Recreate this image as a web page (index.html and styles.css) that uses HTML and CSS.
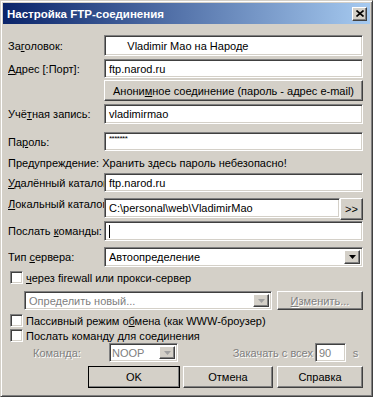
FILE: index.html
```html
<!DOCTYPE html>
<html lang="ru">
<head>
<meta charset="utf-8">
<title>Настройка FTP-соединения</title>
<link rel="stylesheet" href="styles.css">
</head>
<body>
<div class="window">
  <div class="titlebar">
    <span class="title">Настройка FTP-соединения</span>
    <span class="close raised">
      <svg width="8" height="7" viewBox="0 0 8 7"><path d="M0.5 0.5 L7.5 6.5 M7.5 0.5 L0.5 6.5" stroke="#000" stroke-width="1.6" fill="none"/></svg>
    </span>
  </div>
  <div class="body">
    <div class="row r1">
      <div class="label">За<u>г</u>оловок:</div>
      <div class="field sunken"><span class="pre">      Vladimir Mao на Народе</span></div>
    </div>
    <div class="row r2">
      <div class="label"><u>А</u>дрес [:Порт]:</div>
      <div class="field sunken">ftp.narod.ru</div>
    </div>
    <div class="row r3">
      <div class="label"></div>
      <div class="field btn">Анони<u>м</u>ное соединение (пароль - адрес e-mail)</div>
    </div>
    <div class="row r4">
      <div class="label">Учё<u>т</u>ная запись:</div>
      <div class="field sunken">vladimirmao</div>
    </div>
    <div class="row r5">
      <div class="label">Па<u>р</u>оль:</div>
      <div class="field sunken"><span class="stars">*******</span></div>
    </div>
    <div class="warning">Предупреждение: Хранить здесь пароль небезопасно!</div>
    <div class="row r6">
      <div class="label"><u>У</u>далённый каталог:</div>
      <div class="field sunken">ftp.narod.ru</div>
    </div>
    <div class="row r7">
      <div class="label"><u>Л</u>окальный каталог:</div>
      <div class="field sunken">C:\personal\web\VladimirMao</div>
      <div class="browse btn">&gt;&gt;</div>
    </div>
    <div class="row r8">
      <div class="label">Послать <u>к</u>оманды:</div>
      <div class="field sunken"><span class="caret"></span></div>
    </div>
    <div class="row r9">
      <div class="label">Тип <u>с</u>ервера:</div>
      <div class="field sunken combo">
        <span class="combo-text">Автоопределение</span>
        <span class="arrow btn"><svg width="7" height="4" viewBox="0 0 7 4"><path d="M0 0 H7 L3.5 4 Z" fill="#000"/></svg></span>
      </div>
    </div>
    <div class="check c1">
      <span class="box sunken"></span>
      <span><u>ч</u>ерез firewall или прокси-сервер</span>
    </div>
    <div class="row r10">
      <div class="field sunken combo proxy">
        <span class="combo-text disabled-plain">Определить новый...</span>
        <span class="arrow btn"><svg width="7" height="4" viewBox="0 0 7 4"><path d="M0 0 H7 L3.5 4 Z" fill="#a0a0a0"/></svg></span>
      </div>
      <div class="edit btn disabled"><u>И</u>зменить...</div>
    </div>
    <div class="check c2">
      <span class="box sunken"></span>
      <span>Пассивный режим о<u>б</u>мена (как WWW-броузер)</span>
    </div>
    <div class="check c3">
      <span class="box sunken"></span>
      <span>Послать команду для соединения</span>
    </div>
    <div class="row r11">
      <div class="cmd-label disabled">Команда:</div>
      <div class="sunken combo noop">
        <span class="combo-text disabled-plain">NOOP</span>
        <span class="arrow btn"><svg width="7" height="4" viewBox="0 0 7 4"><path d="M0 0 H7 L3.5 4 Z" fill="#a0a0a0"/></svg></span>
      </div>
      <div class="every disabled">Закачать с всех</div>
      <div class="sunken secs"><span class="disabled-plain">90</span></div>
      <div class="unit disabled">s</div>
    </div>
    <div class="buttons">
      <div class="btn ok">OK</div>
      <div class="btn cancel">Отмена</div>
      <div class="btn help">Справка</div>
    </div>
  </div>
</div>
</body>
</html>
```
FILE: styles.css
```css
* { box-sizing: border-box; }

body {
  margin: 0;
  font-family: "Liberation Sans", Arial, sans-serif;
  font-size: 11px;
  color: #000;
  background: #d4d0c8;
}

u { text-decoration: underline; text-underline-offset: 1px; }

.window {
  width: 373px;
  height: 397px;
  background: #d4d0c8;
  border: 1px solid;
  border-color: #d4d0c8 #404040 #404040 #d4d0c8;
  box-shadow: inset 1px 1px #fff, inset -1px -1px #808080;
  padding: 2px;
  display: flex;
  flex-direction: column;
}

.titlebar {
  height: 21px;
  flex: none;
  background: linear-gradient(to right, #0a246a, #a6caf0);
  display: flex;
  align-items: center;
  justify-content: space-between;
  padding: 0 3px 0 4px;
  color: #fff;
  font-weight: bold;
  font-size: 11.5px;
}

.raised, .btn {
  background: #d4d0c8;
  border: 1px solid;
  border-color: #fff #404040 #404040 #fff;
  box-shadow: inset -1px -1px #808080;
}

.close {
  width: 15px;
  height: 14px;
  display: flex;
  align-items: center;
  justify-content: center;
}

.body {
  padding: 0 7px 0 5px;
  display: flex;
  flex-direction: column;
}

.sunken {
  background: #fff;
  border: 1px solid;
  border-color: #808080 #fff #fff #808080;
  box-shadow: inset 1px 1px #404040, inset -1px -1px #d4d0c8;
}

.row {
  display: flex;
  align-items: center;
  height: 20px;
  flex: none;
}

.label {
  width: 96px;
  flex: none;
  overflow: hidden;
  white-space: nowrap;
}

.field {
  flex: 1;
  height: 100%;
  display: flex;
  align-items: center;
  padding-left: 4px;
  white-space: nowrap;
  overflow: hidden;
}

.pre { white-space: pre; }

.btn {
  display: flex;
  align-items: center;
  justify-content: center;
  white-space: nowrap;
}

.field.btn { padding-left: 0; }

.stars { font-size: 8px; position: relative; top: -3px; letter-spacing: -0.5px; }

.caret { width: 1px; height: 13px; background: #000; }

.r1 { margin-top: 11px; height: 21px; }
.r2 { margin-top: 3px; height: 19px; }
.r3 { margin-top: 2px; height: 21px; }
.r4 { margin-top: 3px; height: 20px; }
.r5 { margin-top: 8px; height: 19px; }
.warning { margin-top: 4px; height: 16px; line-height: 16px; white-space: nowrap; }
.r6 { margin-top: 2px; height: 19px; }
.r7 { margin-top: 6px; height: 20px; align-items: flex-start; }
.r8 { margin-top: 3px; height: 20px; }
.r9 { margin-top: 6px; height: 20px; }

.browse {
  width: 23px;
  height: 22px;
  flex: none;
  font-size: 11px;
}

.combo { padding-right: 2px; }
.combo-text { flex: 1; overflow: hidden; white-space: nowrap; }

.arrow {
  width: 16px;
  height: calc(100% - 4px);
  flex: none;
}

.check {
  display: flex;
  align-items: center;
  gap: 3px;
  height: 13px;
  padding-left: 2px;
  white-space: nowrap;
  flex: none;
}

.box { width: 13px; height: 13px; flex: none; }

.c1 { margin-top: 4px; }
.c2 { margin-top: 4px; }
.c3 { margin-top: 2px; }

.r10 { margin-top: 7px; height: 19px; padding-left: 16px; gap: 5px; }
.proxy { flex: 1; }
.edit { width: 86px; height: 19px; flex: none; }

.disabled { color: #808080; text-shadow: 1px 1px #fff; }
.disabled-plain { color: #808080; }

.r11 { margin-top: 1px; height: 19px; }
.cmd-label { width: 101px; padding-left: 25px; flex: none; }
.noop { width: 69px; height: 19px; display: flex; align-items: center; padding-left: 2px; padding-right: 2px; flex: none; }
.every { margin-left: auto; white-space: nowrap; }
.secs { width: 31px; height: 19px; margin-left: 2px; display: flex; align-items: center; padding-left: 3px; flex: none; }
.unit { width: 17px; text-align: center; flex: none; padding-left: 2px; }

.buttons {
  margin-top: 4px;
  display: flex;
  justify-content: flex-end;
  gap: 3px;
  height: 22px;
}
.buttons .btn { height: 22px; }
.ok { width: 92px; outline: 1px solid #000; outline-offset: -1px; }
.cancel { width: 90px; }
.help { width: 86px; margin-left: 1px; }
```
